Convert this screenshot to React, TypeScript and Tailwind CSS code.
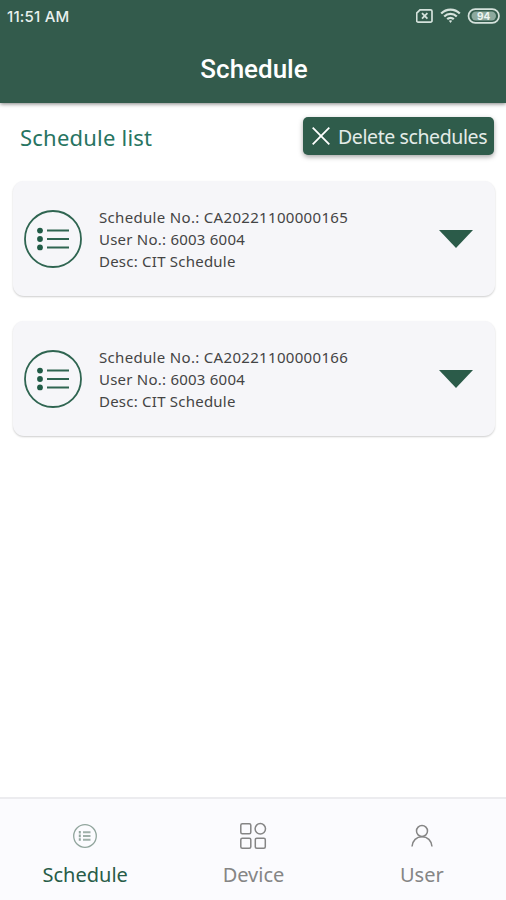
import { ReactNode } from 'react';

interface ScheduleProps {
  scheduleNo: string;
  userNo: string;
  desc: string;
}

const schedules: ScheduleProps[] = [
  { scheduleNo: "CA20221100000165", userNo: "6003 6004", desc: "CIT Schedule" },
  { scheduleNo: "CA20221100000166", userNo: "6003 6004", desc: "CIT Schedule" },
];

const StatusBar = () => (
  <div className="h-8 pl-[7px] pr-[6px] flex items-center justify-between">
    <span className="mt-px text-[15px] leading-5 font-medium tracking-[0.2px] text-[#e9f1ee] font-['Inter',sans-serif]">11:51 AM</span>
    <svg width="84" height="16" viewBox="0 0 84 16" fill="none" stroke="#d5e2dc">
      <path d="M4 1.8H14.5A1.5 1.5 0 0 1 16 3.3V12.7A1.5 1.5 0 0 1 14.5 14.2H2.2A1.5 1.5 0 0 1 .7 12.7V5.1Z" strokeWidth="1.7" />
      <path d="M6 5.2l5.4 5.4m0-5.4l-5.4 5.4" strokeWidth="1.8" />
      <g strokeWidth="2.2">
        <path d="M25.2 5.6a13 13 0 0 1 18.6 0" />
        <path d="M28.2 8.5a9 9 0 0 1 12.6 0" />
        <path d="M31.2 11.2a5 5 0 0 1 6.6 0" />
      </g>
      <path d="M32.8 12.8L34.5 15l1.7-2.2a3 3 0 0 0-3.4 0Z" fill="#d5e2dc" stroke="none" />
      <rect x="52.5" y="1.2" width="30.5" height="13.6" rx="6.8" strokeWidth="1.7" />
      <rect x="55.5" y="3.5" width="24.5" height="9" rx="4.5" fill="#8ca99e" stroke="none" />
      <text x="67.7" y="11.8" textAnchor="middle" className="text-[10px] font-bold font-['Inter',sans-serif]" fill="#edf4f1" stroke="none">94</text>
    </svg>
  </div>
);

const ListIcon = () => (
  <svg width="58" height="58" viewBox="0 0 58 58" fill="none" stroke="#2f6551" className="shrink-0">
    <circle cx="29" cy="29" r="28" strokeWidth="1.8" />
    <g fill="#205b46" stroke="none">
      <circle cx="16" cy="20.6" r="2.9" />
      <circle cx="16" cy="29" r="2.9" />
      <circle cx="16" cy="37.4" r="2.9" />
    </g>
    <path d="M23 20.5h22M23 29h22M23 37.5h22" strokeWidth="1.8" />
  </svg>
);

const ScheduleCard = ({ scheduleNo, userNo, desc }: ScheduleProps) => (
  <div className="h-[115px] pl-[11px] pr-[22px] flex items-center rounded-[11px] bg-[#f6f6f9] shadow-[0_1px_2px_rgba(0,0,0,0.2)]">
    <ListIcon />
    <div className="ml-[17px] flex-1 text-[15px] leading-[22px] tracking-[0.32px] text-[#444444] whitespace-nowrap">
      <p>Schedule No.: {scheduleNo}</p>
      <p className="tracking-[0.23px]">User No.: {userNo}</p>
      <p className="tracking-[0.23px]">Desc: {desc}</p>
    </div>
    <svg width="34" height="18" viewBox="0 0 34 18" className="shrink-0">
      <path d="M0 0h34L17 18Z" fill="#2b5b49" />
    </svg>
  </div>
);

const NavItem = ({ label, active, children }: { label: string; active?: boolean; children: ReactNode }) => (
  <button className="flex-1 pt-[23px] flex flex-col items-center">
    <svg width="28" height="28" viewBox="0 0 28 28" fill="none" stroke="#858585" strokeWidth="1.5">
      {children}
    </svg>
    <span className={active ? "mt-[11px] text-xl leading-7 text-[#285c48]" : "mt-[11px] text-xl leading-7 text-[#858585]"}>
      {label}
    </span>
  </button>
);

export default function App() {
  return (
    <div className="w-full h-screen flex flex-col overflow-hidden bg-white font-['Noto_Sans',sans-serif]">
      <header className="relative h-[103px] shrink-0 bg-[#335b4c] shadow-[0_1px_4px_rgba(0,0,0,0.5)]">
        <StatusBar />
        <h1 className="mt-[21px] pl-[2px] text-center text-[26px] leading-8 font-medium text-white font-['Roboto',sans-serif]">Schedule</h1>
      </header>

      <main className="flex-1 pl-[13px] pr-[11px]">
        <div className="h-[78px] pt-[14px] pl-[7px] pr-px flex items-start justify-between">
          <h2 className="mt-1 text-[22px] leading-8 tracking-[0.22px] text-[#277461]">Schedule list</h2>
          <button className="w-[191px] h-[38px] pl-[9px] flex items-center rounded-[5px] bg-[#2f5c4b] text-[#e4ece8] shadow-[0_2px_5px_rgba(0,0,0,0.35)]">
            <svg width="18" height="18" viewBox="0 0 18 18" stroke="white" strokeWidth="1.8" className="shrink-0">
              <path d="M.7.7l16.6 16.6M17.3.7L.7 17.3" />
            </svg>
            <span className="mt-0.5 ml-2 text-[19.5px] leading-7 tracking-[-0.4px] whitespace-nowrap">Delete schedules</span>
          </button>
        </div>
        <div className="flex flex-col gap-[25px]">
          {schedules.map((item) => (
            <ScheduleCard key={item.scheduleNo} {...item} />
          ))}
        </div>
      </main>

      <nav className="h-[103px] shrink-0 pl-px flex items-start border-t-2 border-[#ececef] bg-[#fbfbfe]">
        <NavItem label="Schedule" active>
          <circle cx="14" cy="14" r="11.3" stroke="#91a59d" strokeWidth="1.3" />
          <path d="M8.8 9v10" stroke="#91a59d" strokeWidth="2" strokeDasharray="2.6 1" />
          <path d="M12 10.3h7.5M12 14h7.5M12 17.7h7.5" stroke="#9fb0a9" strokeWidth="2" />
        </NavItem>
        <NavItem label="Device">
          <rect x="1.8" y="1.8" width="10" height="10" rx="1.5" />
          <circle cx="21.3" cy="6.8" r="5.2" />
          <rect x="1.8" y="16.2" width="10" height="10" rx="1.5" />
          <rect x="16.3" y="16.2" width="10" height="10" rx="1.5" />
        </NavItem>
        <NavItem label="User">
          <circle cx="14" cy="9" r="5.5" />
          <path d="M4 24.5C4.5 18.5 8.5 14.7 14 14.7s9.5 3.8 10 9.8" />
        </NavItem>
      </nav>
    </div>
  );
}
